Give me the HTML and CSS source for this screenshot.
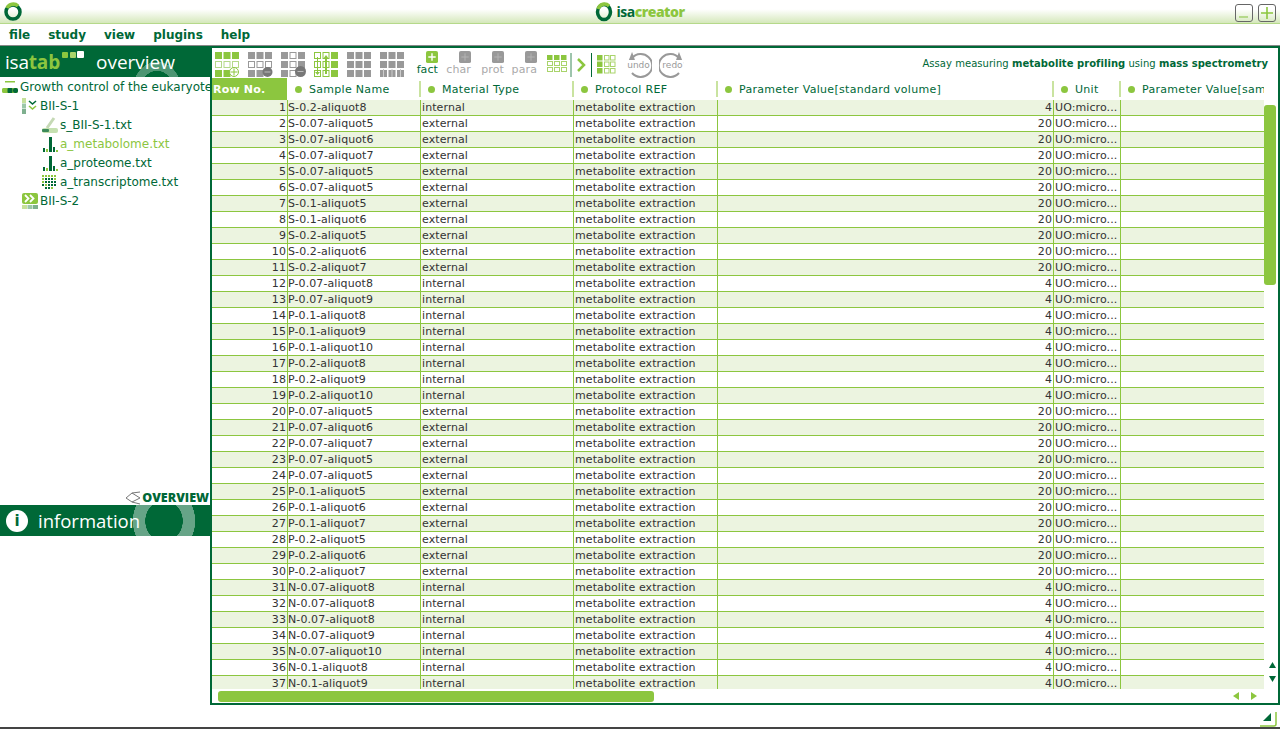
FILE: index.html
```html
<!DOCTYPE html>
<html>
<head>
<title>ISAcreator</title>
<link rel="stylesheet" href="styles.css">
</head>
<body>
<div class="titlebar">
	<svg class="app-ring" width="20" height="20" viewBox="0 0 20 20"><circle cx="10" cy="10" r="7" fill="none" stroke="#006837" stroke-width="3.5"/><path d="M4 6A7 7 0 0 1 15 4" fill="none" stroke="#8cc63f" stroke-width="3.5"/></svg>
	<div class="brand">
		<svg width="18" height="20" viewBox="0 0 18 20"><ellipse cx="9" cy="10" rx="6.5" ry="7.5" fill="none" stroke="#006837" stroke-width="3.5"/><path d="M3 7A7 8 0 0 1 14 4" fill="none" stroke="#8cc63f" stroke-width="3.5"/></svg>
		<span class="brand-name">isa<b>creator</b></span>
	</div>
	<div class="win-buttons">
		<span class="win-btn"><svg width="16" height="16" viewBox="0 0 16 16"><rect x="3" y="11" width="9" height="2" fill="#b5d98a"/></svg></span>
		<span class="win-btn"><svg width="16" height="16" viewBox="0 0 16 16"><path d="M8 2v12M2 8h12" stroke="#8cc63f" stroke-width="1.600"/></svg></span>
	</div>
</div>
<div class="menubar">
	<span>file</span><span>study</span><span>view</span><span>plugins</span><span>help</span>
</div>
<div class="middle">
	<div class="sidebar">
		<div class="side-head"><span class="isatab">isa<b>tab</b></span>
			<svg class="isatab-dots" width="22" height="8" viewBox="0 0 22 8"><rect width="6" height="6" y="1" rx="1" fill="#8cc63f"/><rect x="8" width="6" height="6" y="1" rx="1" fill="#a9d46b"/><rect x="15" width="7" height="7" rx="1" fill="#fff"/></svg>
			<span class="side-title">overview</span></div>
		<div class="tree">
			<div class="node">
				<svg class="ico-root" width="16" height="14" viewBox="0 0 16 14"><rect x="3" y="1" width="10" height="1.500" fill="#8cc63f"/><rect x="0" y="8" width="16" height="5" rx="2" fill="#8cc63f"/><rect x="0" y="8" width="5" height="5" rx="2" fill="#8cc63f"/><rect x="5.500" y="8" width="5" height="5" rx="1" fill="#006837"/><rect x="11" y="8" width="5" height="5" rx="2" fill="#006837"/></svg>
				Growth control of the eukaryote
			</div>
			<div class="node lvl1">
				<svg width="16" height="16" viewBox="0 0 16 16"><rect x="0" y="0" width="4" height="5" fill="#c5e09a"/><rect x="0" y="5.500" width="4" height="5" fill="#9cc7a8"/><rect x="0" y="11" width="4" height="5" fill="#7fb08f"/><path d="M7 2l3.500 3L14 2" transform="translate(0 1)" fill="none" stroke="#006837" stroke-width="1.600"/><path d="M7 8l3.500 3L14 8" fill="none" stroke="#8cc63f" stroke-width="1.600"/></svg>
				BII-S-1
			</div>
			<div class="node lvl2">
				<svg width="16" height="18" viewBox="0 0 16 18"><path d="M5 12L12 2" stroke="#c5d9b5" stroke-width="3"/><rect x="0" y="12" width="16" height="5" rx="2" fill="#c5e0b0"/><rect x="0" y="13" width="7" height="3" rx="1" fill="#3d8a5a"/></svg>
				s_BII-S-1.txt
			</div>
			<div class="node lvl2 active">
				<svg width="16" height="16" viewBox="0 0 16 16"><rect x="1" y="12" width="2" height="4" fill="#006837"/><rect x="4" y="13" width="2" height="3" fill="#8cc63f"/><rect x="7" y="1" width="3" height="15" fill="#006837"/><rect x="11" y="11" width="2" height="5" fill="#006837"/><rect x="14" y="14" width="2" height="2" fill="#8cc63f"/></svg>
				a_metabolome.txt
			</div>
			<div class="node lvl2">
				<svg width="16" height="16" viewBox="0 0 16 16"><rect x="1" y="12" width="2" height="4" fill="#006837"/><rect x="4" y="13" width="2" height="3" fill="#8cc63f"/><rect x="7" y="1" width="3" height="15" fill="#006837"/><rect x="11" y="11" width="2" height="5" fill="#006837"/><rect x="14" y="14" width="2" height="2" fill="#8cc63f"/></svg>
				a_proteome.txt
			</div>
			<div class="node lvl2">
				<svg width="16" height="16" viewBox="0 0 16 16" fill="#8cc63f"><path d="M0 1h2v2H0zM3 1h2v2H3zM6 1h2v2H6zM9 1h2v2H9zM12 1h2v2h-2zM0 4h2v2H0zM12 4h2v2h-2zM0 7h2v2H0zM3 10h2v2H3zM9 13h2v2H9z"/><path fill="#006837" d="M3 4h2v2H3zM6 4h2v2H6zM9 4h2v2H9zM3 7h2v2H3zM6 7h2v2H6zM9 7h2v2H9zM12 7h2v2h-2zM0 10h2v2H0zM6 10h2v2H6zM9 10h2v2H9zM12 10h2v2h-2zM3 13h2v2H3zM6 13h2v2H6z"/></svg>
				a_transcriptome.txt
			</div>
			<div class="node lvl1">
				<svg width="16" height="16" viewBox="0 0 16 16"><rect x="0" y="0" width="16" height="11" rx="2" fill="#8cc63f"/><path d="M3 2l3.500 3.500L3 9M8 2l3.500 3.500L8 9" fill="none" stroke="#fff" stroke-width="1.800"/><rect x="0" y="12" width="5" height="4" fill="#c5e09a"/><rect x="5.500" y="12" width="5" height="4" fill="#9cc7a8"/><rect x="11" y="12" width="5" height="4" fill="#7fb08f"/></svg>
				BII-S-2
			</div>
		</div>
		<div class="overview-link">
			<svg width="16" height="16" viewBox="0 0 16 16" fill="none" stroke="#777"><path d="M15 2L7 3L1 8L7 12L15 14M7 3L15 8M7 12L15 8"/></svg>
			OVERVIEW
		</div>
		<div class="info-head">
			<span class="info-mark">i</span>
			<span class="info-title">information</span>
		</div>
		<div class="info-body"></div>
	</div>
	<div class="main">
		<div class="toolbar">
			<svg class="tool" width="25" height="26" viewBox="0 0 25 26"><g fill="#8cc63f"><rect width="7" height="7"/><rect x="8.500" width="7" height="7"/><rect x="17" width="7" height="7"/><rect y="18" width="7" height="7"/><rect x="8.500" y="18" width="7" height="7"/></g><g fill="#fff" stroke="#b5d98a"><rect x=".5" y="9.500" width="6" height="6"/><rect x="9" y="9.500" width="6" height="6"/><rect x="17.500" y="9.500" width="6" height="6"/></g><circle cx="19" cy="20" r="4.500" fill="#fff" stroke="#8cc63f"/><path d="M19 16.500v7M15.500 20h7" stroke="#8cc63f"/></svg>
			<svg class="tool" width="25" height="26" viewBox="0 0 25 26"><g fill="#999"><rect width="7" height="7"/><rect x="8.500" width="7" height="7"/><rect x="17" width="7" height="7"/><rect y="18" width="7" height="7"/><rect x="8.500" y="18" width="7" height="7"/></g><g fill="#fff" stroke="#999"><rect x=".5" y="9.500" width="6" height="6"/><rect x="9" y="9.500" width="6" height="6"/><rect x="17.500" y="9.500" width="6" height="6"/></g><circle cx="19.500" cy="20" r="5" fill="#777"/><rect x="16.500" y="19.500" width="6" height="1" fill="#bbb"/></svg>
			<svg class="tool" width="25" height="26" viewBox="0 0 25 26"><g fill="#999"><rect width="7" height="7"/><rect x="17" width="7" height="7"/><rect y="9" width="7" height="7"/><rect x="17" y="9" width="7" height="7"/><rect y="18" width="7" height="7"/></g><g fill="#fff" stroke="#999"><rect x="9" y=".5" width="6" height="6"/><rect x="9" y="9.500" width="6" height="6"/><rect x="9" y="18.500" width="6" height="6"/></g><circle cx="19.500" cy="19.500" r="5.500" fill="#777"/><rect x="16.500" y="19" width="6" height="1" fill="#bbb"/></svg>
			<svg class="tool" width="25" height="26" viewBox="0 0 25 26"><g fill="#8cc63f"><rect x="17" width="7" height="7"/><rect x="17" y="9" width="7" height="7"/><rect x="17" y="18" width="7" height="7"/></g><g fill="#fff" stroke="#8cc63f"><rect x=".5" y=".5" width="6" height="6"/><rect x=".5" y="9.500" width="6" height="6"/><rect x=".5" y="18.500" width="6" height="6"/><rect x="9" y=".5" width="6" height="6"/><rect x="9" y="9.500" width="6" height="6"/><rect x="9" y="18.500" width="6" height="6"/></g><path d="M12 3l-3 4h2v15h2V7h2zM3 5h1v15h2l-2.500 3L1 20h2z" fill="#8cc63f"/></svg>
			<svg class="tool" width="25" height="26" viewBox="0 0 25 26" fill="#999"><rect width="7" height="7"/><rect x="8.500" width="7" height="7"/><rect x="17" width="7" height="7"/><rect y="9" width="7" height="7"/><rect x="8.500" y="9" width="7" height="7"/><rect x="17" y="9" width="7" height="7"/><rect y="18" width="7" height="7"/><rect x="8.500" y="18" width="7" height="7"/><rect x="17" y="18" width="7" height="7"/></svg>
			<svg class="tool" width="25" height="26" viewBox="0 0 25 26" fill="#999"><rect width="7" height="7"/><rect x="8.500" width="7" height="7"/><rect x="17" width="7" height="7"/><rect y="9" width="7" height="7"/><rect x="8.500" y="9" width="7" height="7"/><rect x="17" y="9" width="7" height="7"/><rect y="18" width="7" height="7"/><rect x="8.500" y="18" width="7" height="7"/><rect x="17" y="18" width="7" height="7"/><path d="M3.500 17v8M12 17v8M20.500 17v8" stroke="#ccc"/></svg>
			<div class="tab-tool on">
				<svg width="12" height="12" viewBox="0 0 13 13"><rect width="13" height="13" rx="2" fill="#8cc63f"/><path d="M6.500 2.500v8M2.500 6.500h8" stroke="#fff" stroke-width="1.500"/></svg>
				<span>fact</span>
			</div>
			<div class="tab-tool">
				<svg width="12" height="12" viewBox="0 0 13 13"><rect width="13" height="13" rx="2" fill="#999"/><path d="M6.500 2.500v8M2.500 6.500h8" stroke="#b5b5b5"/></svg>
				<span>char</span>
			</div>
			<div class="tab-tool">
				<svg width="12" height="12" viewBox="0 0 13 13"><rect width="13" height="13" rx="2" fill="#999"/><path d="M6.500 2.500v8M2.500 6.500h8" stroke="#b5b5b5"/></svg>
				<span>prot</span>
			</div>
			<div class="tab-tool">
				<svg width="12" height="12" viewBox="0 0 13 13"><rect width="13" height="13" rx="2" fill="#999"/><path d="M6.500 2.500v8M2.500 6.500h8" stroke="#b5b5b5"/></svg>
				<span>para</span>
			</div>
			<svg class="small-grid" width="20" height="18" viewBox="0 0 20 18"><g fill="#8cc63f"><rect width="5.500" height="5"/><rect x="7" width="5.500" height="5"/><rect x="14" width="5.500" height="5"/></g><g fill="#fff" stroke="#a9d46b"><rect x=".5" y="6.500" width="5" height="4"/><rect x="7.500" y="6.500" width="5" height="4"/><rect x="14.500" y="6.500" width="5" height="4"/><rect x=".5" y="12.500" width="5" height="4"/><rect x="7.500" y="12.500" width="5" height="4"/><rect x="14.500" y="12.500" width="5" height="4"/></g></svg>
			<svg class="nav-arrow" width="22" height="24" viewBox="0 0 22 24"><path d="M1 0v24" stroke="#3d8a5a"/><path d="M8 6l6 6-6 6" fill="none" stroke="#8cc63f" stroke-width="2.500"/><path d="M21.500 0v24" stroke="#006837"/></svg>
			<svg class="small-grid2" width="19" height="19" viewBox="0 0 19 19"><g fill="#8cc63f"><rect width="5.500" height="5.500"/><rect y="6.500" width="5.500" height="5.500"/><rect y="13" width="5.500" height="5.500"/></g><g fill="#fff" stroke="#a9d46b"><rect x="7.500" y=".5" width="4.500" height="4.500"/><rect x="13.500" y=".5" width="4.500" height="4.500"/><rect x="7.500" y="7" width="4.500" height="4.500"/><rect x="13.500" y="7" width="4.500" height="4.500"/><rect x="7.500" y="13.500" width="4.500" height="4.500"/><rect x="13.500" y="13.500" width="4.500" height="4.500"/></g></svg>
			<div class="undo-tool"><svg width="27" height="26" viewBox="0 0 27 26" fill="none"><path d="M7 6A11.500 11.500 0 1 1 7 21" stroke="#999" stroke-width="2"/><path d="M9 1v9H1z" fill="#999" transform="rotate(-20 5 6)"/></svg><span>undo</span></div>
			<div class="undo-tool"><svg width="27" height="26" viewBox="0 0 27 26" fill="none"><path d="M20 6A11.500 11.500 0 1 0 20 21" stroke="#999" stroke-width="2"/><path d="M18 1v9h8z" fill="#999" transform="rotate(20 22 6)"/></svg><span>redo</span></div>
			<div class="assay-note">Assay measuring <b>metabolite profiling</b> using <b>mass spectrometry</b></div>
		</div>
		<div class="grid-area">
			<div class="table-wrap">
				<table class="sheet">
					<colgroup><col class="c-row"><col class="c-name"><col class="c-mat"><col class="c-prot"><col class="c-param"><col class="c-unit"><col class="c-last"></colgroup>
					<thead>
						<tr><th class="rowno-head">Row No.</th><th><i></i>Sample Name</th><th><i></i>Material Type</th><th><i></i>Protocol REF</th><th><i></i>Parameter Value[standard volume]</th><th><i></i>Unit</th><th class="last"><i></i>Parameter Value[sam</th></tr>
					</thead>
					<tbody>
						<tr><td class="num">1</td><td>S-0.2-aliquot8</td><td>internal</td><td>metabolite extraction</td><td class="num">4</td><td>UO:micro...</td><td></td></tr>
						<tr><td class="num">2</td><td>S-0.07-aliquot5</td><td>external</td><td>metabolite extraction</td><td class="num">20</td><td>UO:micro...</td><td></td></tr>
						<tr><td class="num">3</td><td>S-0.07-aliquot6</td><td>external</td><td>metabolite extraction</td><td class="num">20</td><td>UO:micro...</td><td></td></tr>
						<tr><td class="num">4</td><td>S-0.07-aliquot7</td><td>external</td><td>metabolite extraction</td><td class="num">20</td><td>UO:micro...</td><td></td></tr>
						<tr><td class="num">5</td><td>S-0.07-aliquot5</td><td>external</td><td>metabolite extraction</td><td class="num">20</td><td>UO:micro...</td><td></td></tr>
						<tr><td class="num">6</td><td>S-0.07-aliquot5</td><td>external</td><td>metabolite extraction</td><td class="num">20</td><td>UO:micro...</td><td></td></tr>
						<tr><td class="num">7</td><td>S-0.1-aliquot5</td><td>external</td><td>metabolite extraction</td><td class="num">20</td><td>UO:micro...</td><td></td></tr>
						<tr><td class="num">8</td><td>S-0.1-aliquot6</td><td>external</td><td>metabolite extraction</td><td class="num">20</td><td>UO:micro...</td><td></td></tr>
						<tr><td class="num">9</td><td>S-0.2-aliquot5</td><td>external</td><td>metabolite extraction</td><td class="num">20</td><td>UO:micro...</td><td></td></tr>
						<tr><td class="num">10</td><td>S-0.2-aliquot6</td><td>external</td><td>metabolite extraction</td><td class="num">20</td><td>UO:micro...</td><td></td></tr>
						<tr><td class="num">11</td><td>S-0.2-aliquot7</td><td>external</td><td>metabolite extraction</td><td class="num">20</td><td>UO:micro...</td><td></td></tr>
						<tr><td class="num">12</td><td>P-0.07-aliquot8</td><td>internal</td><td>metabolite extraction</td><td class="num">4</td><td>UO:micro...</td><td></td></tr>
						<tr><td class="num">13</td><td>P-0.07-aliquot9</td><td>internal</td><td>metabolite extraction</td><td class="num">4</td><td>UO:micro...</td><td></td></tr>
						<tr><td class="num">14</td><td>P-0.1-aliquot8</td><td>internal</td><td>metabolite extraction</td><td class="num">4</td><td>UO:micro...</td><td></td></tr>
						<tr><td class="num">15</td><td>P-0.1-aliquot9</td><td>internal</td><td>metabolite extraction</td><td class="num">4</td><td>UO:micro...</td><td></td></tr>
						<tr><td class="num">16</td><td>P-0.1-aliquot10</td><td>internal</td><td>metabolite extraction</td><td class="num">4</td><td>UO:micro...</td><td></td></tr>
						<tr><td class="num">17</td><td>P-0.2-aliquot8</td><td>internal</td><td>metabolite extraction</td><td class="num">4</td><td>UO:micro...</td><td></td></tr>
						<tr><td class="num">18</td><td>P-0.2-aliquot9</td><td>internal</td><td>metabolite extraction</td><td class="num">4</td><td>UO:micro...</td><td></td></tr>
						<tr><td class="num">19</td><td>P-0.2-aliquot10</td><td>internal</td><td>metabolite extraction</td><td class="num">4</td><td>UO:micro...</td><td></td></tr>
						<tr><td class="num">20</td><td>P-0.07-aliquot5</td><td>external</td><td>metabolite extraction</td><td class="num">20</td><td>UO:micro...</td><td></td></tr>
						<tr><td class="num">21</td><td>P-0.07-aliquot6</td><td>external</td><td>metabolite extraction</td><td class="num">20</td><td>UO:micro...</td><td></td></tr>
						<tr><td class="num">22</td><td>P-0.07-aliquot7</td><td>external</td><td>metabolite extraction</td><td class="num">20</td><td>UO:micro...</td><td></td></tr>
						<tr><td class="num">23</td><td>P-0.07-aliquot5</td><td>external</td><td>metabolite extraction</td><td class="num">20</td><td>UO:micro...</td><td></td></tr>
						<tr><td class="num">24</td><td>P-0.07-aliquot5</td><td>external</td><td>metabolite extraction</td><td class="num">20</td><td>UO:micro...</td><td></td></tr>
						<tr><td class="num">25</td><td>P-0.1-aliquot5</td><td>external</td><td>metabolite extraction</td><td class="num">20</td><td>UO:micro...</td><td></td></tr>
						<tr><td class="num">26</td><td>P-0.1-aliquot6</td><td>external</td><td>metabolite extraction</td><td class="num">20</td><td>UO:micro...</td><td></td></tr>
						<tr><td class="num">27</td><td>P-0.1-aliquot7</td><td>external</td><td>metabolite extraction</td><td class="num">20</td><td>UO:micro...</td><td></td></tr>
						<tr><td class="num">28</td><td>P-0.2-aliquot5</td><td>external</td><td>metabolite extraction</td><td class="num">20</td><td>UO:micro...</td><td></td></tr>
						<tr><td class="num">29</td><td>P-0.2-aliquot6</td><td>external</td><td>metabolite extraction</td><td class="num">20</td><td>UO:micro...</td><td></td></tr>
						<tr><td class="num">30</td><td>P-0.2-aliquot7</td><td>external</td><td>metabolite extraction</td><td class="num">20</td><td>UO:micro...</td><td></td></tr>
						<tr><td class="num">31</td><td>N-0.07-aliquot8</td><td>internal</td><td>metabolite extraction</td><td class="num">4</td><td>UO:micro...</td><td></td></tr>
						<tr><td class="num">32</td><td>N-0.07-aliquot8</td><td>internal</td><td>metabolite extraction</td><td class="num">4</td><td>UO:micro...</td><td></td></tr>
						<tr><td class="num">33</td><td>N-0.07-aliquot8</td><td>internal</td><td>metabolite extraction</td><td class="num">4</td><td>UO:micro...</td><td></td></tr>
						<tr><td class="num">34</td><td>N-0.07-aliquot9</td><td>internal</td><td>metabolite extraction</td><td class="num">4</td><td>UO:micro...</td><td></td></tr>
						<tr><td class="num">35</td><td>N-0.07-aliquot10</td><td>internal</td><td>metabolite extraction</td><td class="num">4</td><td>UO:micro...</td><td></td></tr>
						<tr><td class="num">36</td><td>N-0.1-aliquot8</td><td>internal</td><td>metabolite extraction</td><td class="num">4</td><td>UO:micro...</td><td></td></tr>
						<tr><td class="num">37</td><td>N-0.1-aliquot9</td><td>internal</td><td>metabolite extraction</td><td class="num">4</td><td>UO:micro...</td><td></td></tr>
					</tbody>
				</table>
			</div>
			<div class="vscroll">
				<div class="vthumb"></div>
				<div class="varrows">
					<svg width="9" height="8" viewBox="0 0 9 8"><path d="M4.500 1L8 7H1z" fill="#006837"/></svg>
					<svg width="9" height="8" viewBox="0 0 9 8"><path d="M4.500 7L8 1H1z" fill="#006837"/></svg>
				</div>
			</div>
		</div>
		<div class="hscroll">
			<div class="hthumb"></div>
			<div class="harrows">
				<svg width="7" height="8" viewBox="0 0 7 8"><path d="M0 4l6-4v8z" fill="#8cc63f"/></svg>
				<svg width="7" height="8" viewBox="0 0 7 8"><path d="M7 4L1 0v8z" fill="#8cc63f"/></svg>
			</div>
		</div>
	</div>
</div>
<div class="footer">
	<svg width="17" height="17" viewBox="0 0 17 17"><path d="M11 3v8H3z" fill="#006837"/><path d="M16 2v12q0 2-2 2H0" fill="none" stroke="#8cc63f" stroke-width="1.500"/></svg>
</div>
</body>
</html>
```

FILE: styles.css
```css
html, body { margin: 0; height: 100%; }
body { background: #fff; color: #333; display: flex; flex-direction: column; font-family: "DejaVu Sans", sans-serif; height: 729px; overflow: hidden; width: 1280px; }

.titlebar { align-items: center; background: linear-gradient(#fff 0, #fff 40%, #d5e8bb 100%); border-bottom: 1px solid #b5d98a; box-sizing: border-box; display: grid; flex: none; grid-template-columns: 1fr auto 1fr; height: 24px; padding: 0 3px; }
.brand { align-items: center; display: flex; gap: 3px; }
.brand-name { color: #006837; font-family: "Open Sans", sans-serif; font-size: 14px; font-weight: 700; letter-spacing: -.5px; }
.brand-name b { color: #8cc63f; }
.win-buttons { display: flex; gap: 5px; justify-content: flex-end; margin-top: 2px; padding-right: 1px; }
.win-btn { border: 1px solid #666; border-radius: 3px; box-sizing: border-box; display: block; height: 18px; width: 18px; }

.menubar { align-items: center; border-bottom: 1px solid #888; box-sizing: border-box; color: #006837; display: flex; flex: none; font-size: 12px; font-weight: bold; gap: 18px; height: 22px; padding: 0 9px; }

.middle { display: flex; flex: none; height: 659px; }

.sidebar { display: flex; flex: none; flex-direction: column; width: 210px; }
.side-head { align-items: center; background: radial-gradient(ellipse 24px 28px at 157px 44px, transparent 68%, rgba(255,255,255,.3) 69%, rgba(255,255,255,.3) 100%, transparent 101%) #006837; box-sizing: border-box; color: #fff; display: flex; flex: none; font-family: "Open Sans", sans-serif; font-size: 19px; height: 31px; padding-left: 5px; }
.isatab { font-weight: 400; letter-spacing: -.2px; }
.isatab b { color: #8cc63f; font-weight: 700; }
.isatab-dots { align-self: flex-start; margin: 5px 0 0 2px; }
.side-title { margin-left: 12px; }
.tree { color: #006837; flex: 1; font-size: 12px; overflow: hidden; }
.node { align-items: center; display: flex; gap: 2px; height: 19px; white-space: nowrap; }
.node svg { flex: none; }
.ico-root { margin-left: 2px; }
.lvl1 { padding-left: 22px; }
.lvl2 { padding-left: 42px; }
.active { color: #8cc63f; }
.overview-link { align-items: center; color: #006837; display: flex; flex: none; font-family: "Open Sans", sans-serif; font-size: 12.500px; font-weight: 800; gap: 1px; height: 15px; justify-content: flex-end; padding-right: 1px; }
.info-head { align-items: center; background: radial-gradient(ellipse 31px 34px at 164px 16px, transparent 60%, rgba(255,255,255,.4) 61%, rgba(255,255,255,.4) 100%, transparent 101%) #006837; color: #fff; display: flex; flex: none; gap: 10px; height: 31px; padding-left: 6px; }
.info-mark { background: #fff; border-radius: 50%; color: #006837; font-size: 15px; font-weight: bold; height: 22px; line-height: 22px; text-align: center; width: 22px; }
.info-title { font-family: "Open Sans", sans-serif; font-size: 18.500px; }
.info-body { flex: none; height: 169px; }

.main { border: 2px solid #006837; box-sizing: border-box; display: flex; flex: none; flex-direction: column; height: 659px; width: 1070px; }
.toolbar { align-items: flex-start; box-sizing: border-box; display: flex; flex: none; height: 30px; padding: 4px 10px 0 3px; }
.tool { flex: none; margin-right: 8px; }
.tab-tool { align-items: flex-end; color: #aaa; display: flex; flex: none; flex-direction: column; font-size: 11px; letter-spacing: .1px; line-height: 14px; margin-right: 8px; width: 25px; }
.tab-tool span { display: block; }
.tab-tool svg { margin-top: -1px; }
.tab-tool.on { color: #006837; }
.small-grid { flex: none; margin: 3px 3px 0 2px; }
.nav-arrow { flex: none; margin: 1px 5px 0 0; }
.small-grid2 { flex: none; margin: 3px 9px 0 0; }
.undo-tool { color: #999; flex: none; font-size: 9px; height: 26px; line-height: 26px; margin-right: 7px; position: relative; text-align: center; width: 27px; }
.undo-tool svg { left: 0; position: absolute; top: 0; }
.undo-tool span { background: #fff; position: relative; }
.assay-note { color: #006837; flex: 1; font-size: 10px; letter-spacing: .04px; margin-top: 6px; text-align: right; white-space: nowrap; }

.grid-area { display: flex; flex: none; height: 611px; }
.table-wrap { flex: none; height: 611px; overflow: hidden; width: 1052px; }
.sheet { border-collapse: separate; border-spacing: 0; font-size: 11px; letter-spacing: .09px; table-layout: fixed; width: 1052px; }
.c-row { width: 76px; }
.c-name { width: 133px; }
.c-mat { width: 153px; }
.c-prot { width: 144px; }
.c-param { width: 336px; }
.c-unit { width: 67px; }
.c-last { width: 143px; }
.sheet th { background: linear-gradient(#c9e3a0, #c9e3a0) right 0 top 3px / 2px 16px no-repeat; box-sizing: border-box; color: #006837; font-weight: normal; height: 22px; letter-spacing: .3px; padding: 0 0 0 7px; text-align: left; white-space: nowrap; }
.sheet th.last { background: none; overflow: hidden; }
.sheet th i { background: #8cc63f; border-radius: 50%; display: inline-block; height: 7px; margin-right: 7px; width: 7px; }
.sheet th.rowno-head { background: #8cc63f; border-right: 1px solid #fff; color: #fff; font-weight: bold; letter-spacing: .2px; padding-left: 1px; }
.sheet td { border-bottom: 1px solid #8cc63f; border-right: 1px solid #8cc63f; box-sizing: border-box; height: 16px; overflow: hidden; padding: 0 1px; white-space: nowrap; }
.sheet td:nth-child(2) { padding-left: 0; }
.sheet td:last-child { border-right: 0; }
.sheet tbody tr:nth-child(odd) td { background: #ecf4e0; }
.sheet td.num { text-align: right; }

.vscroll { display: flex; flex: 1; flex-direction: column; justify-content: space-between; padding-top: 27px; }
.vthumb { background: #8cc63f; border-radius: 3px; height: 180px; width: 12px; }
.varrows { align-items: center; display: flex; flex-direction: column; gap: 6px; margin: 0 0 6px 3px; }
.varrows svg { display: block; }
.hscroll { align-items: center; display: flex; flex: none; height: 14px; justify-content: space-between; padding-left: 6px; }
.hthumb { background: #8cc63f; border-radius: 3px; height: 11px; width: 436px; }
.harrows { display: flex; gap: 10px; margin-right: 21px; }
.harrows svg { display: block; }

.footer { align-items: flex-start; border-bottom: 2px solid #444; box-sizing: border-box; display: flex; flex: 1; justify-content: flex-end; padding: 5px 3px 0 0; }
```
